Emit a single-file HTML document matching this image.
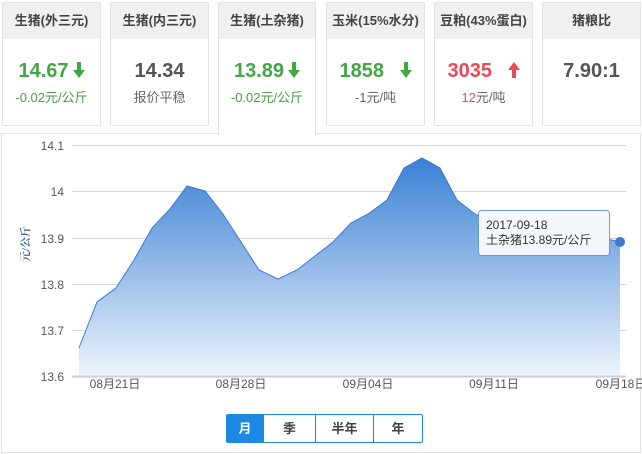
<!DOCTYPE html>
<html><head><meta charset="utf-8">
<style>
body{margin:0;width:642px;height:454px;background:#fff;font-family:"Liberation Sans","Noto Sans CJK SC",sans-serif;position:relative;overflow:hidden}
.card{position:absolute;top:2px;height:124px;border:1px solid #e3e3e3;box-sizing:border-box;background:#fff;text-align:center}
.card .h{height:36px;background:#f0f0f0;line-height:36px;font-size:13px;color:#444;font-weight:bold}
.card .v{margin-top:19px;font-size:20px;font-weight:bold;height:26px;line-height:26px}
.card .s{margin-top:3px;font-size:13px;color:#666}
.g{color:#44a545}.r{color:#ea4a55}.k{color:#555}
.card.act{height:133px;border-bottom:none;z-index:2}
.panel{position:absolute;left:1px;top:133px;width:640px;height:320px;border:1px solid #e3e3e3;box-sizing:border-box}
.btns{position:absolute;top:414px;left:226px;height:29px;display:flex;border:1px solid #1e88e5;box-sizing:border-box;font-size:13px;font-weight:bold;color:#444;border-radius:2px}
.btns div{line-height:27px;text-align:center;border-left:1px solid #1e88e5}
.btns div:first-child{border-left:none;background:#1e88e5;color:#fff}
svg.a{vertical-align:-1px;margin-left:4px}
</style></head><body>
<div class="card" style="left:2px;width:99px"><div class="h">生猪(外三元)</div><div class="v g">14.67<svg class="a" width="12" height="16" viewBox="0 0 12 16"><rect x="4" y="0" width="4" height="10" fill="#44a545"/><path d="M0 8h12l-6 8z" fill="#44a545"/></svg></div><div class="s" style="color:#4a9a4a">-0.02元/公斤</div></div>
<div class="card" style="left:110px;width:99px"><div class="h">生猪(内三元)</div><div class="v k">14.34</div><div class="s">报价平稳</div></div>
<div class="card act" style="left:218px;width:98px"><div class="h">生猪(土杂猪)</div><div class="v g">13.89<svg class="a" width="12" height="16" viewBox="0 0 12 16"><rect x="4" y="0" width="4" height="10" fill="#44a545"/><path d="M0 8h12l-6 8z" fill="#44a545"/></svg></div><div class="s" style="color:#4a9a4a">-0.02元/公斤</div></div>
<div class="card" style="left:326px;width:99px"><div class="h">玉米(15%水分)</div><div class="v g">1858 <svg class="a" style="margin-left:10px" width="12" height="16" viewBox="0 0 12 16"><rect x="4" y="0" width="4" height="10" fill="#44a545"/><path d="M0 8h12l-6 8z" fill="#44a545"/></svg></div><div class="s">-1元/吨</div></div>
<div class="card" style="left:434px;width:99px"><div class="h">豆粕(43%蛋白)</div><div class="v r">3035 <svg class="a" style="margin-left:10px" width="12" height="16" viewBox="0 0 12 16"><rect x="4" y="6" width="4" height="10" fill="#ea4a55"/><path d="M0 8h12l-6 -8z" fill="#ea4a55"/></svg></div><div class="s"><span class="r">12</span>元/吨</div></div>
<div class="card" style="left:542px;width:99px"><div class="h">猪粮比</div><div class="v k">7.90:1</div></div>
<div class="panel"></div>
<svg style="position:absolute;left:0;top:0" width="642" height="454">
<defs><linearGradient id="gr" gradientUnits="userSpaceOnUse" x1="0" y1="158" x2="0" y2="376"><stop offset="0" stop-color="#3a80d4"/><stop offset="1" stop-color="#eef4fc"/></linearGradient></defs>
<g stroke="#d6d6d6" stroke-width="1">
<line x1="72" y1="145.5" x2="626" y2="145.5"/><line x1="72" y1="191.5" x2="626" y2="191.5"/><line x1="72" y1="238.5" x2="626" y2="238.5"/><line x1="72" y1="284.5" x2="626" y2="284.5"/><line x1="72" y1="330.5" x2="626" y2="330.5"/>
</g>
<polygon fill="url(#gr)" points="79,376 79,348 97,302 116,288 134,260 152,228 170,209 187,186 205,191 223,214 241,242 259,270 278,279 297,270 315,256 333,242 351,223 368,214 387,200 404,168 422,158 440,168 457,200 475,214 494,223 515,232 536,237 557,237 578,237 599,237 620,242 620,376"/>
<polyline fill="none" stroke="#3a7bd0" stroke-width="1" points="79,348 97,302 116,288 134,260 152,228 170,209 187,186 205,191 223,214 241,242 259,270 278,279 297,270 315,256 333,242 351,223 368,214 387,200 404,168 422,158 440,168 457,200 475,214 494,223 515,232 536,237 557,237 578,237 599,237 620,242"/>
<line x1="72" y1="376.5" x2="626" y2="376.5" stroke="#c8d0dc" stroke-width="2"/>
<circle cx="620" cy="242" r="5" fill="#3a7bd0"/>
<g font-size="12" fill="#555" text-anchor="end" font-family="Liberation Sans,sans-serif">
<text x="64" y="150">14.1</text><text x="64" y="196">14</text><text x="64" y="243">13.9</text><text x="64" y="289">13.8</text><text x="64" y="335">13.7</text><text x="64" y="381">13.6</text></g>
<g font-size="12" fill="#555" text-anchor="middle" font-family="Liberation Sans,Noto Sans CJK SC,sans-serif">
<text x="115" y="388">08月21日</text><text x="241" y="388">08月28日</text><text x="368" y="388">09月04日</text><text x="494" y="388">09月11日</text><text x="621" y="388">09月18日</text></g>
<text transform="translate(29,262) rotate(-90)" font-size="11" fill="#4a6a9a" font-family="Liberation Serif,Noto Serif CJK SC,serif" font-weight="bold">元/公斤</text>
<rect x="478.5" y="210.5" width="131" height="45" rx="3" fill="#f4f8fd" stroke="#6a9bd6"/>
<text x="486" y="229" font-size="12" fill="#333" font-family="Liberation Sans,Noto Sans CJK SC,sans-serif">2017-09-18</text>
<text x="486" y="244" font-size="12" fill="#333" font-family="Liberation Sans,Noto Sans CJK SC,sans-serif">土杂猪13.89元/公斤</text>
</svg>
<div class="btns"><div style="width:36px">月</div><div style="width:51px">季</div><div style="width:57px">半年</div><div style="width:48px">年</div></div>
</body></html>
